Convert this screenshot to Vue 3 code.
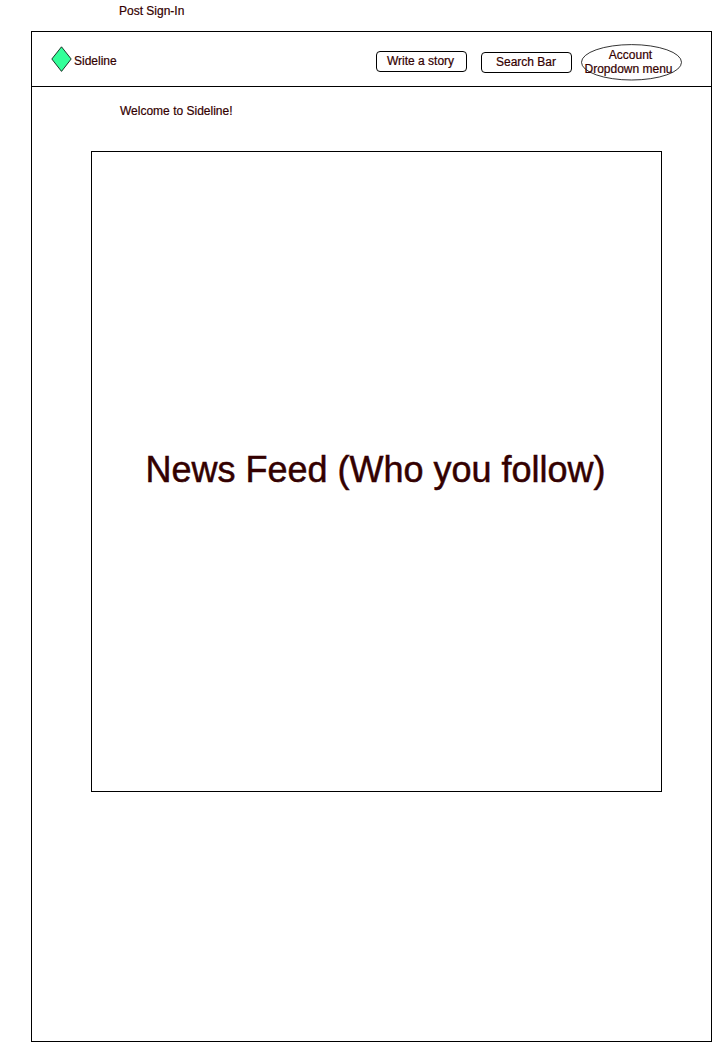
<script setup>
const actions = ['Write a story', 'Search Bar']
</script>

<template>
  <div class="page">
    <div class="caption"><span class="caption-text">Post Sign-In</span></div>
    <main class="frame">
      <header class="bar">
        <div class="brand">
          <svg class="logo" width="21" height="27" viewBox="0 0 21 27">
            <path d="M10.5 0.8 L20.2 13 L10.5 25.4 L0.8 13 Z" fill="#33ff99" stroke="#000" stroke-width="0.8" />
          </svg>
          <span class="brand-name">Sideline</span>
        </div>
        <nav class="actions">
          <button v-for="label in actions" :key="label" class="action"><span class="label">{{ label }}</span></button>
          <div class="account">
            <svg class="oval" width="101" height="37" viewBox="0 0 101 37">
              <ellipse cx="50.5" cy="18.3" rx="50" ry="17.7" fill="#fff" stroke="#000" stroke-width="0.8" />
            </svg>
            <div class="account-text"><span class="line first">Account</span><span class="line second">Dropdown menu</span></div>
          </div>
        </nav>
      </header>
      <div class="welcome"><span class="welcome-text">Welcome to Sideline!</span></div>
      <section class="feed"><span class="feed-title">News Feed (Who you follow)</span></section>
    </main>
  </div>
</template>

<style>
body {
  background: #fff;
}
</style>

<style scoped>
.page {
  box-sizing: border-box;
  width: 714px;
  height: 1044px;
  overflow: hidden;
  font-family: "Liberation Sans", Arial, sans-serif;
  font-size: 12px;
  line-height: 14px;
  color: #300;
  white-space: nowrap;
  -webkit-text-stroke: 0.2px #300;
}
.caption {
  box-sizing: border-box;
  height: 31px;
  padding: 4px 0 0 119px;
}
.frame {
  box-sizing: border-box;
  width: 681px;
  height: 1011px;
  margin-left: 31px;
  border: 1px solid #000;
}
.bar {
  display: flex;
  justify-content: space-between;
  align-items: flex-start;
  box-sizing: border-box;
  height: 55px;
  padding: 12px 29px 0 19px;
  border-bottom: 1px solid #000;
}
.brand {
  display: flex;
  gap: 2px;
  padding-top: 2px;
}
.logo,
.oval {
  display: block;
}
.brand-name {
  padding-top: 8px;
}
.actions {
  display: flex;
  align-items: flex-start;
}
.action {
  box-sizing: border-box;
  width: 91px;
  height: 21px;
  margin: 7px 14px 0 0;
  padding: 0 2px 0 0;
  border: 1px solid #000;
  border-radius: 4px;
  background: #fff;
  font: inherit;
  line-height: 19px;
  color: inherit;
  text-align: center;
}
.action + .action {
  margin: 8px 9px 0 0;
  padding-right: 1px;
}
.account {
  position: relative;
  width: 101px;
  height: 37px;
}
.account-text {
  position: absolute;
  top: 4px;
  left: 0;
  width: 99px;
  text-align: center;
}
.line {
  display: block;
}
.second {
  margin-left: -4px;
}
.welcome {
  box-sizing: border-box;
  height: 64px;
  padding: 17px 0 0 88px;
}
.feed {
  display: flex;
  align-items: center;
  justify-content: center;
  box-sizing: border-box;
  width: 571px;
  height: 641px;
  margin-left: 59px;
  padding: 0 2px 3px 0;
  border: 1px solid #000;
  font-size: 36px;
  line-height: 42px;
}
.feed-title {
  -webkit-text-stroke: 0.5px #300;
}
</style>
